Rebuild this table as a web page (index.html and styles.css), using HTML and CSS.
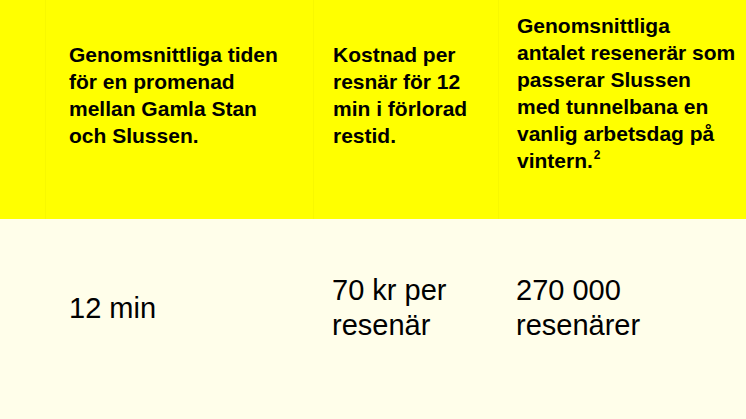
FILE: index.html
```html
<!DOCTYPE html>
<html lang="sv">
<head>
<meta charset="utf-8">
<link rel="stylesheet" href="styles.css">
</head>
<body>
<div class="table">
  <div class="row head">
    <div class="cell spacer"></div>
    <div class="cell c1"><p>Genomsnittliga tiden för en promenad mellan Gamla Stan och Slussen.</p></div>
    <div class="cell c2"><p>Kostnad per resnär för 12 min i förlorad restid.</p></div>
    <div class="cell c3"><p>Genomsnittliga antalet resenerär som passerar Slussen med tunnelbana en vanlig arbetsdag på vintern.<sup>2</sup></p></div>
  </div>
  <div class="row body">
    <div class="cell spacer"></div>
    <div class="cell c1"><p>12 min</p></div>
    <div class="cell c2"><p>70 kr per resenär</p></div>
    <div class="cell c3"><p>270 000 resenärer</p></div>
  </div>
</div>
</body>
</html>
```
FILE: styles.css
```css
html, body {
  margin: 0;
  padding: 0;
}
body {
  width: 746px;
  height: 419px;
  overflow: hidden;
  font-family: "Liberation Sans", Arial, sans-serif;
  color: #000;
  background: #fffeea;
}
.table {
  display: flex;
  flex-direction: column;
}
.row {
  display: grid;
  grid-template-columns: 45px 268px 185px 248px;
}
.head {
  height: 219px;
  background: #ffff00;
}
.body {
  height: 200px;
  background: #fffeea;
}
.cell {
  display: flex;
  align-items: center;
  box-sizing: border-box;
}
.cell p {
  margin: 0;
}
.head .cell {
  padding-bottom: 30px;
  font-size: 21px;
  font-weight: bold;
  line-height: 27px;
  border-left: 1px solid #f8f800;
}
.head .spacer {
  border-left: none;
}
.head .c3 {
  padding-bottom: 34px;
}
.body .cell {
  padding-bottom: 22px;
  font-size: 29px;
  line-height: 35px;
}
.c1 {
  padding-left: 23px;
  padding-right: 30px;
}
.body .c1 {
  padding-left: 24px;
}
.c2 {
  padding-left: 19px;
  padding-right: 15px;
}
.c3 {
  padding-left: 18px;
  padding-right: 9px;
}
sup {
  font-size: 12px;
  line-height: 0;
  vertical-align: 9px;
  margin-left: 1px;
}
```
